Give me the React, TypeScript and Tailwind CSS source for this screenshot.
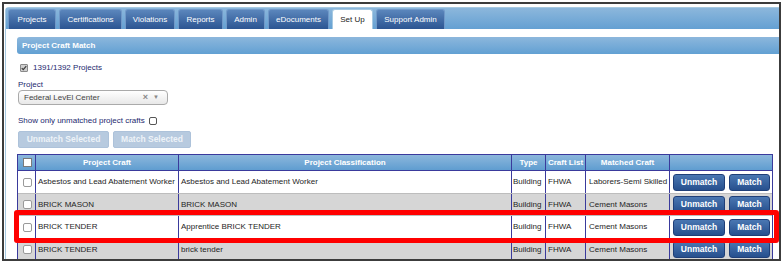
import type { ReactNode } from "react";

type Tab = { label: string; width: string; active?: boolean };

type CraftRow = {
  craft: string;
  classification: string;
  matched: string;
  shaded: boolean;
  height: string;
};

const tabs: Tab[] = [
  { label: "Projects", width: "w-[48px]" },
  { label: "Certifications", width: "w-[63px]" },
  { label: "Violations", width: "w-[50px]" },
  { label: "Reports", width: "w-[45px]" },
  { label: "Admin", width: "w-[39px]" },
  { label: "eDocuments", width: "w-[61px]" },
  { label: "Set Up", width: "w-[41px]", active: true },
  { label: "Support Admin", width: "w-[69px]" },
];

const rows: CraftRow[] = [
  {
    craft: "Asbestos and Lead Abatement Worker",
    classification: "Asbestos and Lead Abatement Worker",
    matched: "Laborers-Semi Skilled",
    shaded: false,
    height: "h-[23px]",
  },
  {
    craft: "BRICK MASON",
    classification: "BRICK MASON",
    matched: "Cement Masons",
    shaded: true,
    height: "h-[22px]",
  },
  {
    craft: "BRICK TENDER",
    classification: "Apprentice BRICK TENDER",
    matched: "Cement Masons",
    shaded: false,
    height: "h-[23px]",
  },
  {
    craft: "BRICK TENDER",
    classification: "brick tender",
    matched: "Cement Masons",
    shaded: true,
    height: "h-[22px]",
  },
];

const cols =
  "grid grid-cols-[17px_143px_333px_34px_40px_84px_103px]";

function Cell({ children, first, className = "" }: { children?: ReactNode; first?: boolean; className?: string }) {
  return (
    <div
      className={`flex items-center overflow-hidden whitespace-nowrap ${first ? "" : "border-l border-[#3a3a9c]"} ${className}`}
    >
      {children}
    </div>
  );
}

function RowCheckbox() {
  return <span className="ml-[5px] block h-[9px] w-[9px] rounded-[2px] border border-[#9a9a9a] bg-white" />;
}

function BlueButton({ label, width }: { label: string; width: string }) {
  return (
    <button
      type="button"
      className={`flex h-[17px] ${width} items-center justify-center rounded-[3px] border border-[#1f3f78] bg-gradient-to-b from-[#4a77b2] to-[#27508e] text-[8.5px] font-bold text-white`}
    >
      {label}
    </button>
  );
}

export default function App() {
  return (
    <div
      className="h-[262px] w-[782px] overflow-hidden bg-white pl-[2px] pt-[2px]"
      style={{ fontFamily: '"Liberation Sans", Arial, sans-serif' }}
    >
      <div className="relative h-[259px] w-[779px] overflow-hidden border-2 border-[#3c3c3c] bg-white">
        <div className="ml-[1px] mt-[3px] w-[800px] rounded-tl-[4px] border-l border-t border-[#a6c9e2]">
          {/* Tab bar */}
          <div className="flex h-[21px] gap-[3px] bg-gradient-to-b from-[#8cb7dc] to-[#64a0d2] pl-[2px] pt-[1px]">
            {tabs.map((tab) =>
              tab.active ? (
                <div
                  key={tab.label}
                  className={`flex h-[20px] ${tab.width} items-center justify-center rounded-t-[3px] border border-b-0 border-[#a6c9e2] bg-white text-[8px] text-[#222]`}
                >
                  {tab.label}
                </div>
              ) : (
                <div
                  key={tab.label}
                  className={`flex h-[20px] ${tab.width} items-center justify-center rounded-t-[3px] border border-b-0 border-[#7098c8] bg-gradient-to-b from-[#5b86bc] to-[#2c5592] text-[8px] text-white`}
                >
                  {tab.label}
                </div>
              ),
            )}
          </div>

          {/* Panel */}
          <div className="pl-[11px] pt-[8px]">
            <div className="flex h-[17px] items-center rounded-l-[3px] bg-gradient-to-b from-[#8cb7dc] to-[#62a0d3] pl-[5px] text-[8px] font-bold text-white">
              Project Craft Match
            </div>

            <div className="pl-[1px] text-[8px] text-[#231f6e]">
              <div className="mt-[7px] flex h-[14px] items-center gap-[5px] pl-[2px]">
                <span className="flex h-[8px] w-[8px] items-center justify-center rounded-[1px] border border-[#8a8a8a] bg-[#cfcfcf]">
                  <svg viewBox="0 0 8 8" className="h-[6px] w-[6px]" fill="none" stroke="#3a3a3a" strokeWidth="1.6">
                    <path d="M1 4.2l2 2L7 1.5" />
                  </svg>
                </span>
                <span>1391/1392 Projects</span>
              </div>

              <div className="mt-[5px] h-[10px] leading-[10px]">Project</div>
              <div className="flex h-[15px] w-[150px] items-center justify-between rounded-[4px] border border-[#aaaaaa] bg-gradient-to-b from-white to-[#e8e8e8] pl-[5px] pr-[8px] text-[#444]">
                <span>Federal LevEl Center</span>
                <span className="flex items-center gap-[5px] text-[#888]">
                  <span className="text-[9px] font-bold">×</span>
                  <span className="text-[6px]">▼</span>
                </span>
              </div>

              <div className="mt-[10px] flex h-[11px] items-center gap-[4px]">
                <span>Show only unmatched project crafts</span>
                <span className="block h-[8px] w-[8px] rounded-[2px] border border-[#555] bg-white" />
              </div>

              <div className="mt-[5px] flex gap-[4px]">
                <button
                  type="button"
                  className="h-[17px] w-[91px] rounded-[2px] border border-[#adc2da] bg-[#b7cadf] text-[8.5px] font-bold text-[#eef3f8]"
                >
                  Unmatch Selected
                </button>
                <button
                  type="button"
                  className="h-[17px] w-[78px] rounded-[2px] border border-[#adc2da] bg-[#b7cadf] text-[8.5px] font-bold text-[#eef3f8]"
                >
                  Match Selected
                </button>
              </div>
            </div>

            {/* Table */}
            <div className="mt-[6px] w-[756px] border border-[#3a3a9c] text-[8px] text-[#1e1e1e]">
              <div className={`${cols} h-[15px] bg-gradient-to-b from-[#8cb7dc] to-[#5f9dd0] font-bold text-white`}>
                <Cell first>
                  <span className="ml-[5px] block h-[9px] w-[9px] border border-[#7a7a7a] bg-white" />
                </Cell>
                <Cell className="justify-center">Project Craft</Cell>
                <Cell className="justify-center">Project Classification</Cell>
                <Cell className="justify-center">Type</Cell>
                <Cell className="justify-center">Craft List</Cell>
                <Cell className="justify-center">Matched Craft</Cell>
                <Cell />
              </div>
              {rows.map((row, i) => (
                <div
                  key={i}
                  className={`${cols} ${row.height} border-t ${i === 0 ? "border-[#3a3a9c]" : "border-[#bdbdbd]"} ${row.shaded ? "bg-[#d6d6d6]" : "bg-white"}`}
                >
                  <Cell first>
                    <RowCheckbox />
                  </Cell>
                  <Cell className="pl-[2px]">{row.craft}</Cell>
                  <Cell className="pl-[2px]">{row.classification}</Cell>
                  <Cell className="pl-[1px]">Building</Cell>
                  <Cell className="pl-[2px]">FHWA</Cell>
                  <Cell className="pl-[3px]">{row.matched}</Cell>
                  <Cell className="gap-[4px] pl-[3px]">
                    <BlueButton label="Unmatch" width="w-[52px]" />
                    <BlueButton label="Match" width="w-[41px]" />
                  </Cell>
                </div>
              ))}
            </div>
          </div>
        </div>

        {/* Highlight around the selected row */}
        <div className="absolute left-[10px] top-[206px] h-[33px] w-[765px] rounded-[3px] border-[5px] border-[#ff0000]" />
      </div>
    </div>
  );
}
